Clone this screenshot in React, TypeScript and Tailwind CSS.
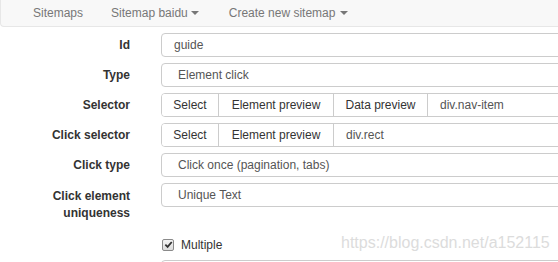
import React from "react";

const Caret = ({ ml = "ml-[3px]" }: { ml?: string }) => (
  <span className={`inline-block ${ml} w-0 h-0 border-l-[4px] border-r-[4px] border-t-[4px] border-l-transparent border-r-transparent border-t-[#777] align-middle`} />
);

const Label = ({ children, extra = "" }: { children: React.ReactNode; extra?: string }) => (
  <div className={`w-[130px] shrink-0 text-right font-bold text-[12px] leading-[17px] text-[#333] ${extra}`}>{children}</div>
);

const Input = ({ text, pl = "pl-[12px]" }: { text: string; pl?: string }) => (
  <div className={`ml-[31px] w-[500px] shrink-0 h-[24px] border border-[#ccc] rounded-[4px] bg-white flex items-center ${pl} text-[12px] text-[#555]`}>
    {text}
  </div>
);

const Btn = ({ text, w, first = false }: { text: string; w: string; first?: boolean }) => (
  <div className={`${w} shrink-0 h-full flex items-center justify-center text-[12px] text-[#333] bg-white ${first ? "" : "border-l border-[#ccc]"}`}>
    {text}
  </div>
);

export default function App() {
  return (
    <div
      className="w-[558px] h-[262px] overflow-hidden bg-white relative"
      style={{ fontFamily: '"Liberation Sans", Arial, sans-serif' }}
    >
      <div className="w-[620px] h-[27px] bg-[#f8f8f8] border-l border-b border-[#e7e7e7] rounded-bl-[4px] flex items-center pl-[32px] text-[12px] text-[#777]">
        <span className="shrink-0">Sitemaps</span>
        <span className="ml-[28px] flex items-center shrink-0">
          Sitemap baidu
          <Caret ml="ml-[3px]" />
        </span>
        <span className="ml-[30px] flex items-center shrink-0">
          Create new sitemap
          <Caret ml="ml-[5px]" />
        </span>
      </div>

      <div className="flex flex-col gap-[6px] mt-[6px]">
        <div className="flex items-start">
          <Label extra="pt-[4px]">Id</Label>
          <Input text="guide" />
        </div>
        <div className="flex items-start">
          <Label extra="pt-[4px]">Type</Label>
          <Input text="Element click" pl="pl-[16px]" />
        </div>
        <div className="flex items-start">
          <Label extra="pt-[4px]">Selector</Label>
          <div className="ml-[31px] w-[500px] shrink-0 h-[24px] border border-[#ccc] rounded-[4px] flex overflow-hidden">
            <Btn text="Select" w="w-[56px]" first />
            <Btn text="Element preview" w="w-[115px]" />
            <Btn text="Data preview" w="w-[94px]" />
            <div className="flex-1 border-l border-[#ccc] flex items-center pl-[12px] text-[12px] text-[#555]">div.nav-item</div>
          </div>
        </div>
        <div className="flex items-start">
          <Label extra="pt-[4px]">Click selector</Label>
          <div className="ml-[31px] w-[500px] shrink-0 h-[24px] border border-[#ccc] rounded-[4px] flex overflow-hidden">
            <Btn text="Select" w="w-[56px]" first />
            <Btn text="Element preview" w="w-[115px]" />
            <div className="flex-1 border-l border-[#ccc] flex items-center pl-[12px] text-[12px] text-[#555]">div.rect</div>
          </div>
        </div>
        <div className="flex items-start">
          <Label extra="pt-[4px]">Click type</Label>
          <Input text="Click once (pagination, tabs)" pl="pl-[16px]" />
        </div>
        <div className="flex items-start">
          <Label extra="pt-[5px]">
            Click element
            <br />
            uniqueness
          </Label>
          <Input text="Unique Text" pl="pl-[16px]" />
        </div>
      </div>

      <div className="flex items-center ml-[162px] mt-[14px] h-[17px]">
        <span className="w-[12px] h-[12px] border border-[#8a8a8a] rounded-[2px] bg-gradient-to-b from-[#f4f4f4] to-[#dcdcdc] flex items-center justify-center">
          <svg width="9" height="9" viewBox="0 0 10 10">
            <path d="M1.5 5.2 L4 7.6 L8.6 2.2" fill="none" stroke="#333" strokeWidth="2" />
          </svg>
        </span>
        <span className="ml-[7px] text-[12px] text-[#333]">Multiple</span>
      </div>

      <div className="absolute left-[161px] top-[260px] w-[420px] h-[24px] border border-[#ccc] rounded-[4px]" />

      <div className="absolute left-[341px] top-[233px] text-[16px] text-[#dcdcdc] leading-[20px]">
        https://blog.csdn.net/a152115
      </div>
    </div>
  );
}
